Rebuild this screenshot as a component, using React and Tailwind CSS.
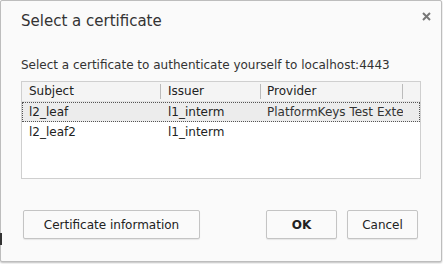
export default function App() {
  const font = { fontFamily: '"DejaVu Sans", sans-serif' };
  return (
    <div className="w-[443px] h-[264px] bg-white relative overflow-hidden" style={font}>
      <div className="w-[442px] h-[262px] bg-[#fafafa] border border-[#bdbdbd] rounded-[2px] shadow-[0_1px_2px_rgba(0,0,0,0.25)] flex flex-col">
        <div className="flex items-start justify-between pl-[20px] pr-[10px] pt-[10px] h-[44px]">
          <div className="text-[15px] text-[#333] leading-[20px]">Select a certificate</div>
          <svg width="9" height="9" viewBox="0 0 9 9" className="mt-[1px]">
            <path d="M1 1L8 8M8 1L1 8" stroke="#777" strokeWidth="2" />
          </svg>
        </div>
        <div className="pl-[20px] text-[12px] text-[#333] leading-[16px] mt-[12px]">
          Select a certificate to authenticate yourself to localhost:4443
        </div>
        <div className="ml-[20px] mt-[8px] w-[400px] h-[98px] bg-white border border-[#cfcfcf] text-[12px] text-[#222]">
          <div className="flex h-[20px] bg-[#f4f4f4] border-b border-[#e2e2e2] items-center">
            <div className="w-[139px] pl-[7px] border-r border-[#bbb] h-[15px] leading-[15px]">Subject</div>
            <div className="w-[100px] pl-[7px] border-r border-[#bbb] h-[15px] leading-[15px]">Issuer</div>
            <div className="w-[142px] pl-[6px] border-r border-[#bbb] h-[15px] leading-[15px]">Provider</div>
          </div>
          <div className="flex h-[20px] bg-[#ececec] border border-dotted border-[#555] items-center">
            <div className="w-[138px] pl-[6px] whitespace-nowrap">l2_leaf</div>
            <div className="w-[100px] pl-[7px] whitespace-nowrap">l1_interm</div>
            <div className="w-[142px] pl-[6px] whitespace-nowrap overflow-hidden text-[#333]">PlatformKeys Test Exte</div>
          </div>
          <div className="flex h-[20px] items-center">
            <div className="w-[139px] pl-[7px] whitespace-nowrap">l2_leaf2</div>
            <div className="w-[100px] pl-[7px] whitespace-nowrap">l1_interm</div>
          </div>
        </div>
        <div className="flex items-center mt-[31px] pl-[22px] pr-[23px] text-[12px] text-[#222]">
          <button className="w-[177px] h-[29px] border border-[#c4c4c4] rounded-[2px] bg-[#fafafa] shadow-[0_1px_1px_rgba(0,0,0,0.08)]">Certificate information</button>
          <div className="flex-1" />
          <button className="w-[71px] h-[29px] border border-[#c4c4c4] rounded-[2px] bg-[#fafafa] font-bold shadow-[0_1px_1px_rgba(0,0,0,0.08)]">OK</button>
          <button className="w-[71px] h-[29px] ml-[10px] border border-[#c4c4c4] rounded-[2px] bg-[#fafafa] shadow-[0_1px_1px_rgba(0,0,0,0.08)]">Cancel</button>
        </div>
      </div>
      <div className="absolute left-0 top-[233px] w-[2px] h-[12px] bg-[#333]" />
    </div>
  );
}
